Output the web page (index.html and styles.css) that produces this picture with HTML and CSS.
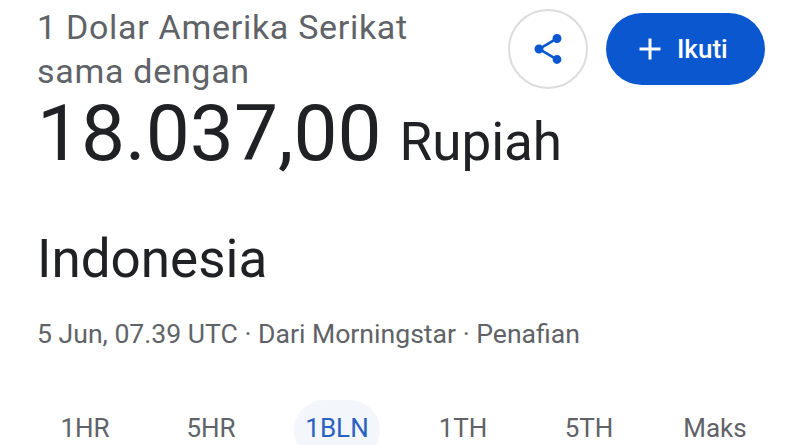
FILE: index.html
```html
<!DOCTYPE html>
<html lang="en">

<head>
    <meta charset="UTF-8">
    <meta name="viewport" content="width=device-width, initial-scale=1.0">
    <title>Dolar ke Rupiah</title>
    <link rel="stylesheet" href="styles.css">
</head>

<body>
    <div class="header">
        <div class="label">1 Dolar Amerika Serikat<br>sama dengan</div>
        <div class="actions">
            <div class="share">
                <svg width="36" height="36" viewBox="0 0 24 24">
                    <path fill="#0b57d0" d="M18 16.08c-.76 0-1.44.3-1.96.77L8.91 12.7c.05-.23.09-.46.09-.7s-.04-.47-.09-.7l7.05-4.11c.54.5 1.25.81 2.04.81 1.66 0 3-1.34 3-3s-1.34-3-3-3-3 1.34-3 3c0 .24.04.47.09.7L8.04 9.81C7.5 9.31 6.79 9 6 9c-1.66 0-3 1.34-3 3s1.34 3 3 3c.79 0 1.5-.31 2.04-.81l7.12 4.16c-.05.21-.08.43-.08.65 0 1.61 1.31 2.92 2.92 2.92 1.61 0 2.92-1.31 2.92-2.92s-1.31-2.92-2.92-2.92z"/>
                </svg>
            </div>
            <div class="follow">
                <svg width="36" height="36" viewBox="0 0 24 24">
                    <path fill="#fff" d="M19 13h-6v6h-2v-6H5v-2h6V5h2v6h6v2z"/>
                </svg>
                <span>Ikuti</span>
            </div>
        </div>
    </div>

    <div class="value">
        <span class="amount">18.037,00</span>
        <span class="unit">Rupiah</span>
    </div>

    <div class="country">Indonesia</div>
    <div class="meta">5 Jun, 07.39 UTC · Dari Morningstar · Penafian</div>

    <div class="tabs">
        <div class="tab">1HR</div>
        <div class="tab">5HR</div>
        <div class="tab active">1BLN</div>
        <div class="tab">1TH</div>
        <div class="tab">5TH</div>
        <div class="tab">Maks</div>
    </div>
</body>

</html>
```
FILE: styles.css
```css
* {
    margin: 0;
    padding: 0;
    box-sizing: border-box;
}

body {
    width: 800px;
    height: 445px;
    overflow: hidden;
    background-color: #fff;
    color: #202124;
    font-family: Roboto, "Liberation Sans", sans-serif;
    padding-left: 37px;
}

.header {
    display: flex;
    justify-content: space-between;
    height: 90px;
    padding-right: 35px;
}

.label {
    padding-top: 5px;
    font-size: 34px;
    line-height: 44px;
    letter-spacing: 0.7px;
    color: #5f6368;
}

.value {
    display: flex;
    align-items: baseline;
    gap: 18px;
    margin-top: 3px;
}

.amount {
    font-size: 78.4px;
    line-height: 80px;
}

.unit {
    font-size: 53px;
}

.actions {
    display: flex;
    gap: 18px;
    padding-top: 9px;
}

.share {
    width: 80px;
    height: 80px;
    display: flex;
    align-items: center;
    justify-content: center;
    border: 2px solid #dcdcdc;
    border-radius: 50%;
}

.follow {
    width: 159px;
    height: 72px;
    margin-top: 4px;
    padding-left: 26px;
    display: flex;
    align-items: center;
    gap: 9px;
    background-color: #0b57d0;
    color: #fff;
    border-radius: 36px;
    font-size: 26px;
    font-weight: 500;
}

.country {
    margin-top: 54px;
    font-size: 53px;
    line-height: 64px;
}

.meta {
    margin-top: 27px;
    font-size: 26.6px;
    line-height: 32px;
    color: #5f6368;
}

.tabs {
    display: grid;
    grid-template-columns: repeat(6, 86px);
    gap: 40px;
    margin-top: 50px;
    margin-left: 5px;
}

.tab {
    height: 60px;
    padding-top: 12px;
    text-align: center;
    font-size: 26px;
    line-height: 32px;
    color: #5f6368;
}

.tab.active {
    background-color: #f3f6fb;
    color: #2a62c4;
    border-radius: 30px;
}
```
